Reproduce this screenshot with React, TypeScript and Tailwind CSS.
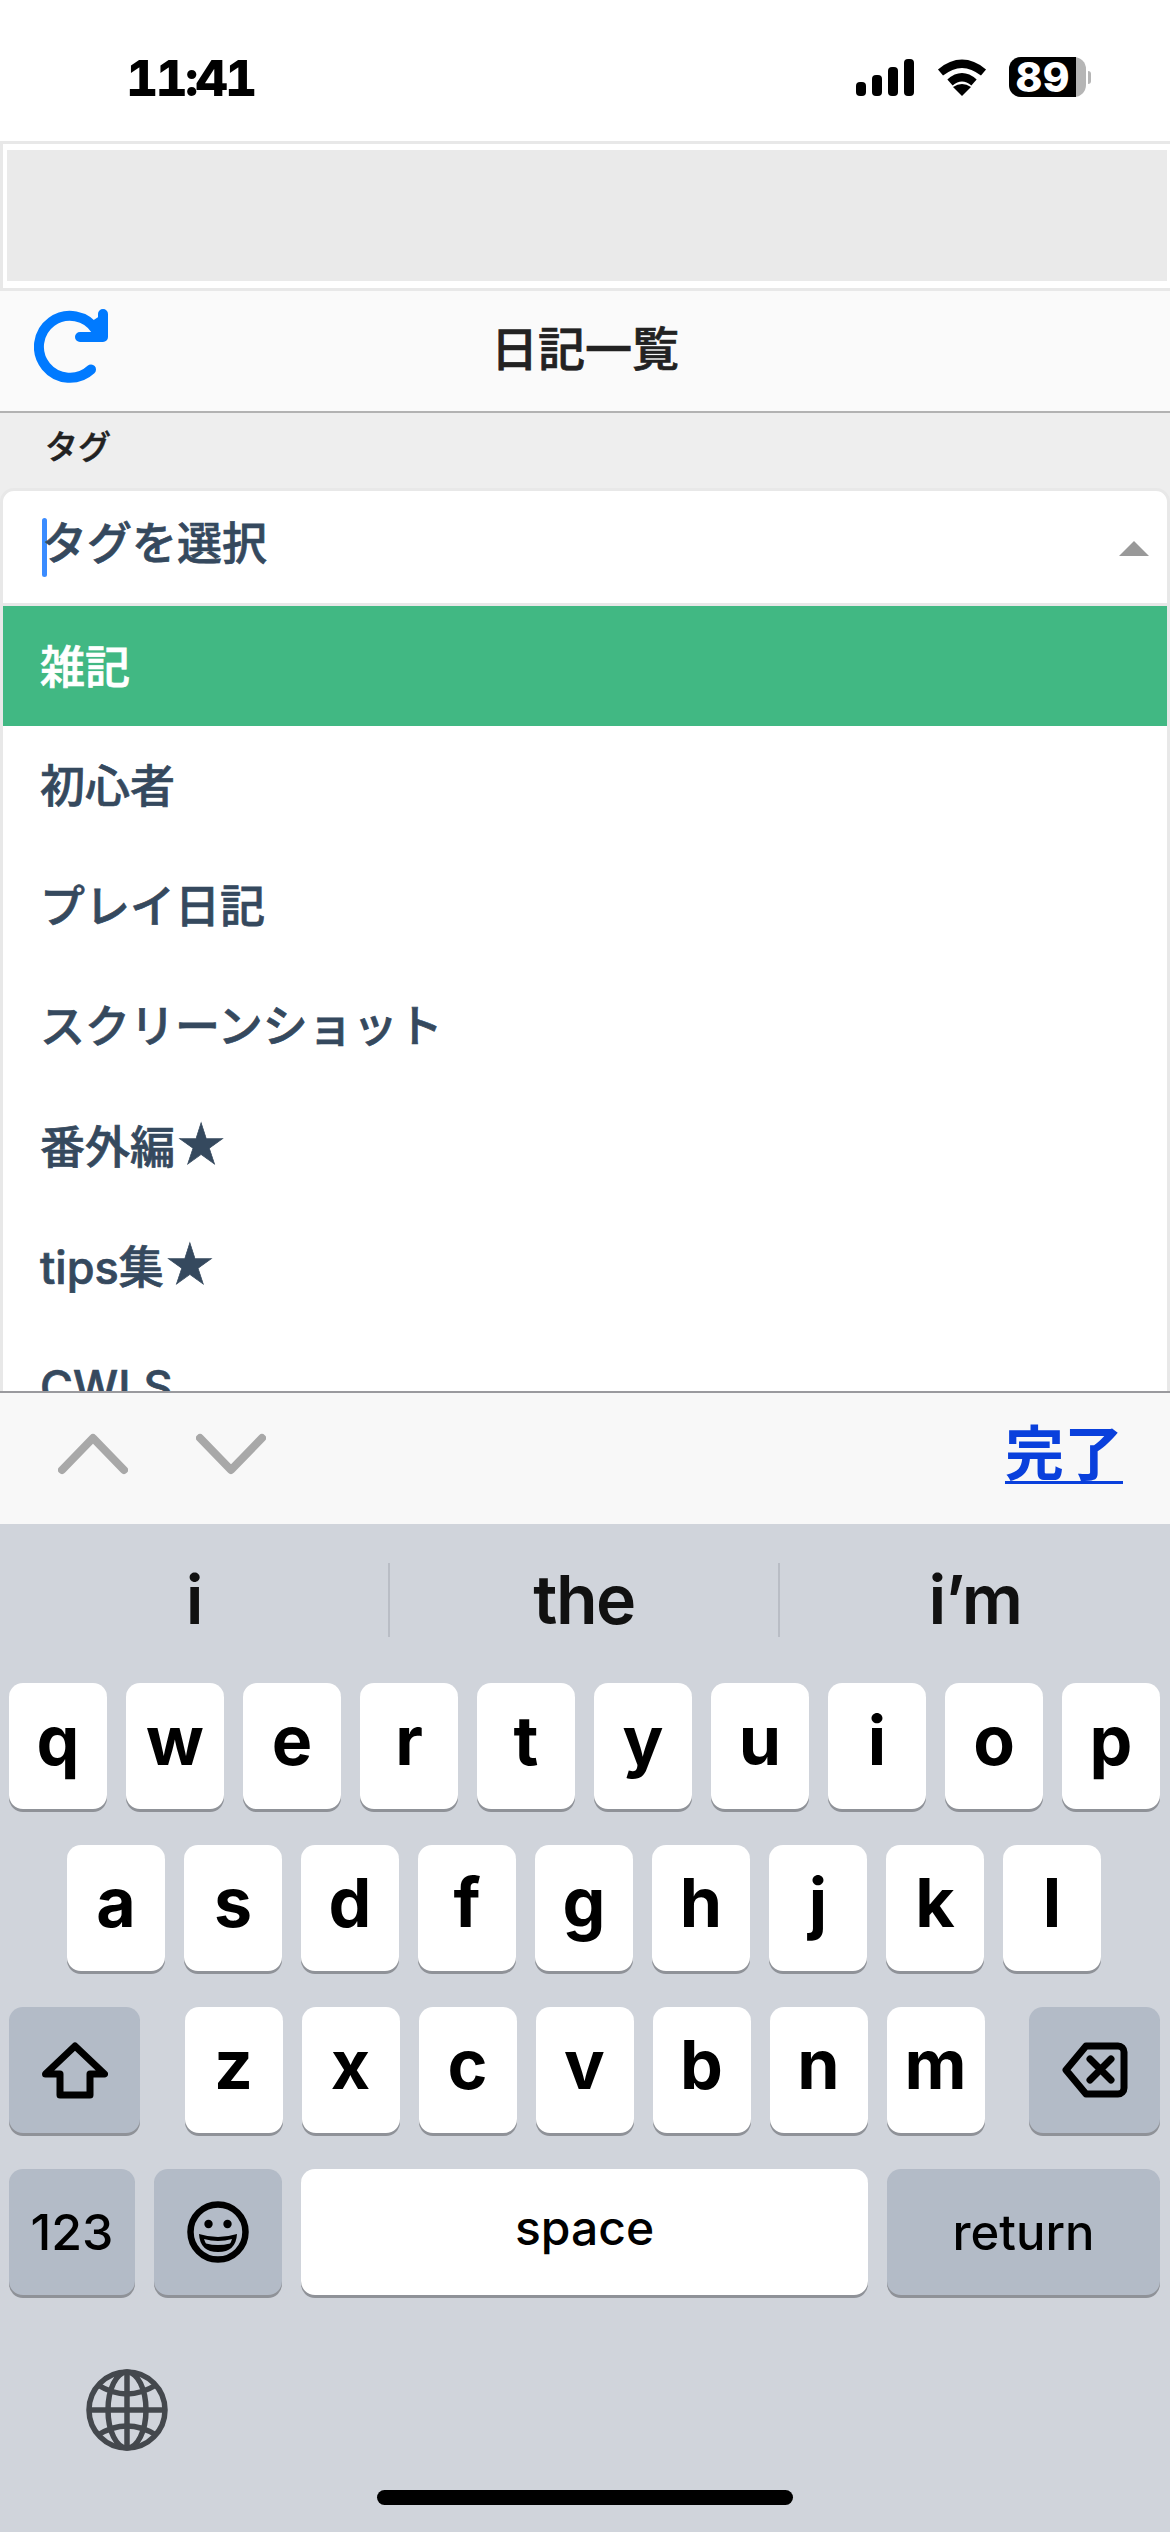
import React from "react";

const items = ["初心者", "プレイ日記", "スクリーンショット", "番外編★", "tips集★", "CWLS"];
const row1 = ["q", "w", "e", "r", "t", "y", "u", "i", "o", "p"];
const row2 = ["a", "s", "d", "f", "g", "h", "j", "k", "l"];
const row3 = ["z", "x", "c", "v", "b", "n", "m"];

function Letter({ c }: { c: string }) {
  return (
    <div className="w-[98px] h-[126px] rounded-[14px] bg-white shadow-[0_3px_0_#8f9298] flex items-center justify-center text-black text-[68px] font-bold leading-none pb-[12px]">
      {c}
    </div>
  );
}

function Special({ w, children, white }: { w: string; children: React.ReactNode; white?: boolean }) {
  return (
    <div className={`${w} h-[126px] rounded-[14px] ${white ? "bg-white" : "bg-[#b3bbc7]"} shadow-[0_3px_0_#8f9298] flex items-center justify-center text-black`}>
      {children}
    </div>
  );
}

function Label({ t }: { t: string }) {
  if (t.endsWith("★")) {
    return (
      <span>
        {t.slice(0, -1)}
        <span className="text-[50px] leading-none">★</span>
      </span>
    );
  }
  return <span>{t}</span>;
}

export default function App() {
  return (
    <div className="w-[1170px] h-[2532px] overflow-hidden flex flex-col bg-[#eeeeee] font-[Inter,'Noto_Sans_CJK_JP',sans-serif]">
      {/* status bar */}
      <div className="h-[141px] shrink-0 bg-white flex items-start justify-between pt-[50px] pl-[126px] pr-[79px]">
        <span className="text-[50px] leading-[57px] font-extrabold text-black tabular-nums tracking-[-2.8px]">11:41</span>
        <div className="flex items-center gap-[23px] pt-[7px]">
          <svg width="58" height="37" viewBox="0 0 58 37" fill="#000">
            <rect x="0" y="23" width="10" height="14" rx="4" />
            <rect x="16" y="16" width="10" height="21" rx="4" />
            <rect x="32" y="8" width="10" height="29" rx="4" />
            <rect x="48" y="0" width="10" height="37" rx="4" />
          </svg>
          <svg width="50" height="37" viewBox="0 0 50 37">
            <path d="M3.5 13.5 Q25 -4 46.5 13.5" fill="none" stroke="#000" strokeWidth="8" />
            <path d="M13 23.5 Q25 13 37 23.5" fill="none" stroke="#000" strokeWidth="8" />
            <path d="M25 37 L16 28 Q25 22 34 28 Z" fill="#000" />
          </svg>
          <div className="flex items-center gap-[2px] -ml-[1px]">
            <div className="w-[77px] h-[40px] rounded-[12px] flex bg-[#b5b5b5]">
              <div className="w-[67px] h-full rounded-l-[12px] bg-black text-white text-[41px] font-extrabold leading-[40px] text-center">89</div>
            </div>
            <div className="w-[3px] h-[13px] rounded-r-full bg-[#b5b5b5]" />
          </div>
        </div>
      </div>

      {/* ad slot */}
      <div className="h-[150px] shrink-0 border-[3px] border-r-0 border-[#e8e8e8] bg-white pt-[6px] pb-[7px] pl-[4px] pr-[3px]">
        <div className="h-full bg-[#eaeaea]" />
      </div>

      {/* nav */}
      <div className="h-[122px] shrink-0 bg-[#fafafa] border-b-2 border-[#b2b2b2] flex items-center relative">
        <svg className="absolute left-[34px] top-[18px]" width="74" height="74" viewBox="0 0 74 74" fill="none" stroke="#007aff">
          <path d="M62 21 A31 31 0 1 0 57 60.5" strokeWidth="10" strokeLinecap="round" />
          <path d="M69 5 V28 H46" strokeWidth="10" strokeLinejoin="round" strokeLinecap="round" />
          <path d="M69 5 V28 L55 14 Z" fill="#007aff" stroke="none" />
        </svg>
        <div className="w-full text-center text-[47px] leading-none font-medium text-[#222222] pb-[6px] [-webkit-text-stroke:0.7px]">日記一覧</div>
      </div>

      {/* label */}
      <div className="h-[75px] shrink-0 pl-[45px] pt-[16px] text-[33px] leading-[36px] font-medium text-[#222222] [-webkit-text-stroke:0.5px]">タグ</div>

      {/* select */}
      <div className="h-[118px] shrink-0 rounded-t-[14px] border-[3px] border-[#e8e8e8] bg-white flex items-center justify-between pl-[39px] pr-[18px]">
        <div className="flex items-center">
          <div className="w-[5px] h-[59px] rounded-full bg-[#3b8cff]" />
          <span className="-ml-[5px] text-[45px] leading-none font-medium text-[#35495e] pb-[7px] [-webkit-text-stroke:0.7px]">タグを選択</span>
        </div>
        <div className="w-0 h-0 border-x-[15px] border-x-transparent border-b-[15px] border-b-[#999999] mt-[2px]" />
      </div>

      {/* options */}
      <div className="h-[785px] shrink-0 overflow-hidden bg-white border-x-[3px] border-[#e8e8e8]">
        <div className="h-[120px] bg-[#41b883] text-white flex items-center pl-[37px] pt-[2px] text-[45px] font-medium leading-none [-webkit-text-stroke:0.7px]">雑記</div>
        {items.map((t) => (
          <div key={t} className="h-[120px] flex items-center pl-[37px] text-[45px] font-medium leading-none text-[#35495e] [-webkit-text-stroke:0.7px]">
            <Label t={t} />
          </div>
        ))}
      </div>

      {/* toolbar */}
      <div className="h-[133px] shrink-0 bg-[#f8f8f8] border-t-2 border-[#9a9a9e] flex items-center justify-between pl-[58px] pr-[47px] pb-[10px]">
        <div className="flex items-center gap-[68px]">
          <svg width="70" height="44" viewBox="0 0 70 44" fill="none" stroke="#a8a8a8" strokeWidth="8" strokeLinecap="round" strokeLinejoin="round">
            <path d="M4 38 L35 6 L66 38" />
          </svg>
          <svg width="70" height="44" viewBox="0 0 70 44" fill="none" stroke="#a8a8a8" strokeWidth="8" strokeLinecap="round" strokeLinejoin="round">
            <path d="M4 6 L35 38 L66 6" />
          </svg>
        </div>
        <span className="text-[59px] leading-none font-bold text-[#0a40dc] underline underline-offset-[6px] decoration-[3px]">完了</span>
      </div>

      {/* keyboard */}
      <div className="flex-1 bg-[#d0d4db] flex flex-col pt-[39px]">
        <div className="grid grid-cols-3 h-[74px] text-[#111111] text-[68px] font-semibold tracking-[-1.5px]">
          <div className="flex items-center justify-center border-r-2 border-[#b9bdc5] leading-none pb-[2px]">i</div>
          <div className="flex items-center justify-center border-r-2 border-[#b9bdc5] leading-none pb-[2px]">the</div>
          <div className="flex items-center justify-center leading-none pb-[2px]">i’m</div>
        </div>

        <div className="mt-[46px] flex flex-col gap-[36px]">
          <div className="flex gap-[19px] pl-[9px]">
            {row1.map((c, i) => <Letter key={i} c={c} />)}
          </div>
          <div className="flex gap-[19px] justify-center pr-[2px]">
            {row2.map((c) => <Letter key={c} c={c} />)}
          </div>
          <div className="flex pl-[9px] pr-[10px] justify-between">
            <Special w="w-[131px]">
              <svg width="66" height="57" viewBox="0 0 66 57" fill="none" stroke="#000" strokeWidth="7" strokeLinejoin="round">
                <path d="M33 4 L62.5 32 H48 V53 H18 V32 H3.5 Z" />
              </svg>
            </Special>
            <div className="flex gap-[19px]">
              {row3.map((c) => <Letter key={c} c={c} />)}
            </div>
            <Special w="w-[131px]">
              <svg width="66" height="56" viewBox="0 0 66 56" fill="none" stroke="#000" strokeWidth="7" strokeLinejoin="round" strokeLinecap="round">
                <path d="M24 4 H56 a6 6 0 0 1 6 6 V46 a6 6 0 0 1 -6 6 H24 L4 28 Z" />
                <path d="M28 17 L49 38 M49 17 L28 38" />
              </svg>
            </Special>
          </div>
          <div className="flex gap-[19px] pl-[9px]">
            <Special w="w-[126px]"><span className="text-[50px] font-medium leading-none">123</span></Special>
            <Special w="w-[128px]">
              <svg width="62" height="62" viewBox="0 0 62 62">
                <circle cx="31" cy="31" r="27.5" fill="none" stroke="#000" strokeWidth="6.5" />
                <circle cx="21.5" cy="23" r="4.2" fill="#000" />
                <circle cx="40.5" cy="23" r="4.2" fill="#000" />
                <path d="M12 33 Q31 39 50 33 Q49 51 31 51 Q13 51 12 33 Z" fill="#000" />
                <path d="M17 38 Q31 42 45 38 Q44 41.5 43 42.5 Q31 45.5 19 42.5 Q18 41 17 38 Z" fill="#b3bbc7" />
              </svg>
            </Special>
            <Special w="w-[567px]" white><span className="text-[48px] font-medium leading-none pb-[8px]">space</span></Special>
            <Special w="w-[273px]"><span className="text-[49px] font-medium leading-none">return</span></Special>
          </div>
        </div>

        <div className="mt-[74px] pl-[86px]">
          <svg width="82" height="82" viewBox="0 0 82 82" fill="none" stroke="#44484d" strokeWidth="5.5">
            <circle cx="41" cy="41" r="38" />
            <ellipse cx="41" cy="41" rx="19" ry="38" />
            <path d="M41 3 V79 M3 41 H79" />
            <path d="M12 16 Q41 34 70 16 M12 66 Q41 48 70 66" />
          </svg>
        </div>

        <div className="mt-[39px] mx-auto w-[416px] h-[15px] rounded-full bg-black" />
      </div>
    </div>
  );
}
